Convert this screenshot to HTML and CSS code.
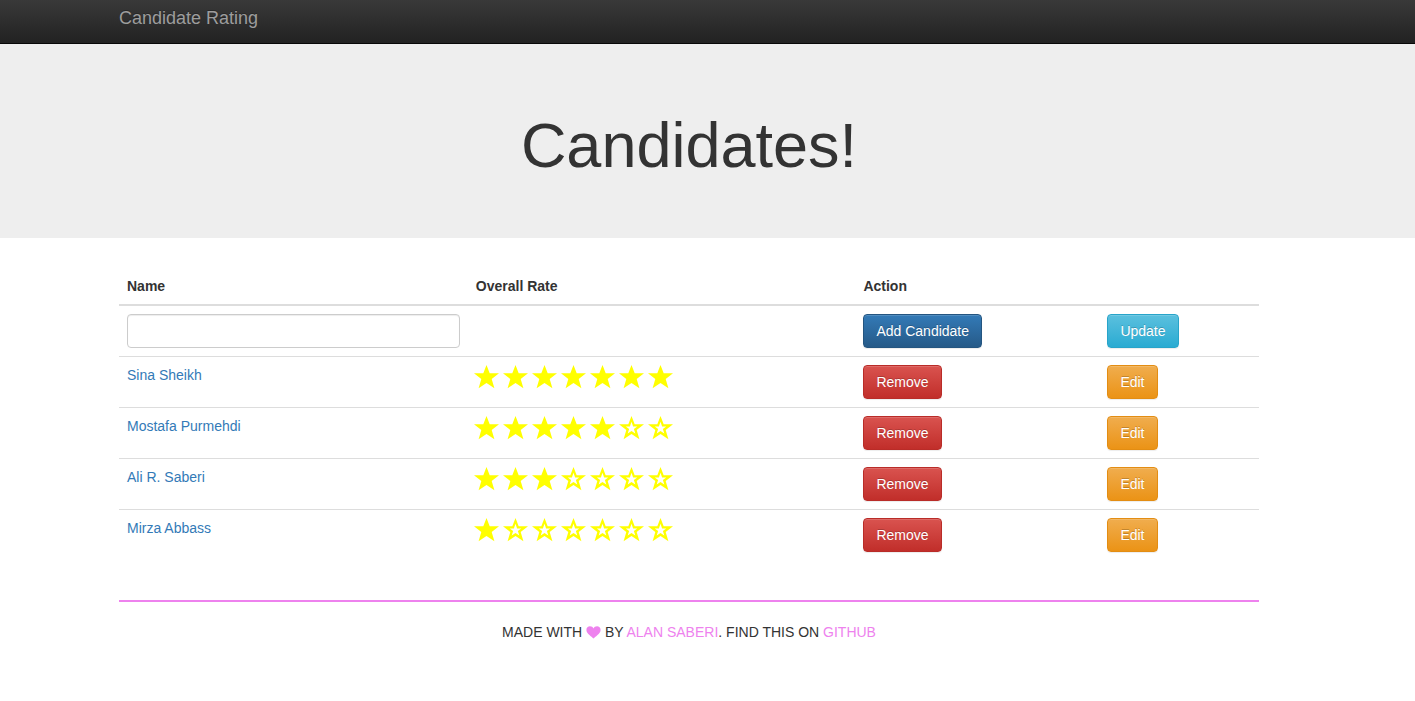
FILE: index.html
```html
<!DOCTYPE html>
<html lang="en">
<head>
<meta charset="utf-8">
<title>Candidate Rating</title>
<link rel="stylesheet" href="styles.css">
</head>
<body>
<svg class="sprite" aria-hidden="true">
  <symbol id="full" viewBox="0 0 25 24"><path d="M12.500 0 15.700 8.300H25L17.700 14 20.400 23.300 12.500 17.900 4.600 23.300 7.300 14 0 8.300H9.300Z"/></symbol>
  <symbol id="empty" viewBox="0 0 25 24"><path fill-rule="evenodd" d="M12.500 0 15.700 8.300H25L17.700 14 20.400 23.300 12.500 17.900 4.600 23.300 7.300 14 0 8.300H9.300ZM12.500 5.700 10.900 10.500H6.800L10.100 13.100 8.700 17.600 12.500 15 16.300 17.600 14.900 13.100 18.200 10.500H14.100Z"/></symbol>
</svg>
<nav class="navbar"><div class="container"><a class="brand" href="#">Candidate Rating</a></div></nav>
<header class="jumbotron"><div class="container"><h1>Candidates!</h1></div></header>
<main class="container">
  <table class="table">
    <thead>
      <tr><th class="col-name">Name</th><th class="col-rate">Overall Rate</th><th class="col-action">Action</th><th></th></tr>
    </thead>
    <tbody>
      <tr>
        <td><input class="field" type="text" aria-label="Name"></td><td></td>
        <td><button class="btn primary" type="button">Add Candidate</button></td>
        <td><button class="btn info" type="button">Update</button></td>
      </tr>
      <tr>
        <td><a href="#">Sina Sheikh</a></td>
        <td><div class="stars" role="img" aria-label="7 of 7"><svg><use href="#full"/></svg><svg><use href="#full"/></svg><svg><use href="#full"/></svg><svg><use href="#full"/></svg><svg><use href="#full"/></svg><svg><use href="#full"/></svg><svg><use href="#full"/></svg></div></td>
        <td><button class="btn danger" type="button">Remove</button></td>
        <td><button class="btn warning" type="button">Edit</button></td>
      </tr>
      <tr>
        <td><a href="#">Mostafa Purmehdi</a></td>
        <td><div class="stars" role="img" aria-label="5 of 7"><svg><use href="#full"/></svg><svg><use href="#full"/></svg><svg><use href="#full"/></svg><svg><use href="#full"/></svg><svg><use href="#full"/></svg><svg><use href="#empty"/></svg><svg><use href="#empty"/></svg></div></td>
        <td><button class="btn danger" type="button">Remove</button></td>
        <td><button class="btn warning" type="button">Edit</button></td>
      </tr>
      <tr>
        <td><a href="#">Ali R. Saberi</a></td>
        <td><div class="stars" role="img" aria-label="3 of 7"><svg><use href="#full"/></svg><svg><use href="#full"/></svg><svg><use href="#full"/></svg><svg><use href="#empty"/></svg><svg><use href="#empty"/></svg><svg><use href="#empty"/></svg><svg><use href="#empty"/></svg></div></td>
        <td><button class="btn danger" type="button">Remove</button></td>
        <td><button class="btn warning" type="button">Edit</button></td>
      </tr>
      <tr>
        <td><a href="#">Mirza Abbass</a></td>
        <td><div class="stars" role="img" aria-label="1 of 7"><svg><use href="#full"/></svg><svg><use href="#empty"/></svg><svg><use href="#empty"/></svg><svg><use href="#empty"/></svg><svg><use href="#empty"/></svg><svg><use href="#empty"/></svg><svg><use href="#empty"/></svg></div></td>
        <td><button class="btn danger" type="button">Remove</button></td>
        <td><button class="btn warning" type="button">Edit</button></td>
      </tr>
    </tbody>
  </table>
  <footer class="footer">
    Made with <svg class="heart" viewBox="0 0 15 13" role="img" aria-label="love"><path d="M7.500 12.500C6.300 10.800.4 7.800.4 3.900C.4 1.700 2 .3 4 .3C5.600 .3 6.900 1.200 7.500 2.500C8.100 1.200 9.400.3 11 .3C13 .3 14.600 1.700 14.600 3.900C14.600 7.800 8.700 10.800 7.500 12.500Z"/></svg> by <a href="#">Alan Saberi</a>. Find this on <a href="#">GitHub</a>
  </footer>
</main>
</body>
</html>
```
FILE: styles.css
```css
* { box-sizing: border-box; }
body {
  margin: 0;
  background: #fff;
  color: #333;
  font: 14px/20px "Liberation Sans", Arial, sans-serif;
}
a { color: #337ab7; text-decoration: none; }
.sprite { display: none; }

/* The page column sits left of centre by half of the gutter. */
.navbar, .jumbotron, body > .container { --gutter: 37px; }
.container {
  width: calc(100% - var(--gutter));
  max-width: 1170px;
  padding: 0 15px;
  margin-left: max(0px, calc((100% - var(--gutter) - 1170px) / 2));
}

.navbar {
  padding: 8px 0 15px;
  border-bottom: 1px solid #080808;
  background: linear-gradient(#393939, #222);
}
.brand { display: block; color: #9d9d9d; font-size: 18px; text-shadow: 0 -1px 0 rgba(0, 0, 0, .25); }

.jumbotron { padding: 48px 0; margin-bottom: 30px; background: #eee; }
h1 { margin: 19px 0 10px; font-size: 63px; line-height: 69px; font-weight: 500; text-align: center; }

.table { width: 100%; margin-bottom: 20px; table-layout: fixed; border-spacing: 0; }
th, td { padding: 8px; text-align: left; vertical-align: top; }
th { border-bottom: 2px solid #ddd; }
tbody tr + tr td { border-top: 1px solid #ddd; }
.col-name { width: 30.6%; }
.col-rate { width: 34%; }
.col-action { width: 21.4%; }

.field {
  display: block;
  width: 100%;
  height: 34px;
  padding: 6px 12px;
  border: 1px solid #ccc;
  border-radius: 4px;
  font: inherit;
  color: #555;
  box-shadow: inset 0 1px 1px rgba(0, 0, 0, .075);
}
.btn {
  display: block;
  padding: 6px 12px;
  border: 1px solid;
  border-radius: 4px;
  color: #fff;
  font: inherit;
  text-shadow: 0 -1px 0 rgba(0, 0, 0, .2);
  box-shadow: inset 0 1px 0 rgba(255, 255, 255, .15), 0 1px 1px rgba(0, 0, 0, .075);
}
.primary { background: linear-gradient(#337ab7, #265a88); border-color: #245580; }
.info { background: linear-gradient(#5bc0de, #2aabd2); border-color: #28a4c9; }
.danger { background: linear-gradient(#d9534f, #c12e2a); border-color: #b92c28; }
.warning { background: linear-gradient(#f0ad4e, #eb9316); border-color: #e38d13; }

.stars { display: flex; gap: 4px; margin-left: -2px; }
.stars svg { width: 25px; height: 24px; fill: #ff0; }

.footer {
  margin-top: 40px;
  padding: 20px 0;
  border-top: 2px solid violet;
  text-align: center;
  text-transform: uppercase;
}
.footer a { color: violet; }
.heart { width: 15px; height: 13px; fill: violet; vertical-align: -2px; }
```
